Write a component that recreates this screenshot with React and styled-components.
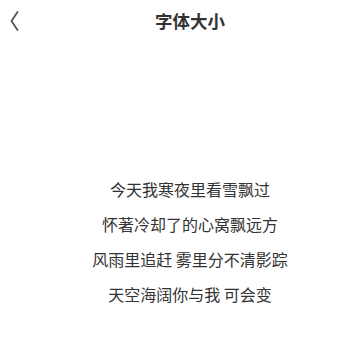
import React from "react";
import styled, { createGlobalStyle } from "styled-components";

const Global = createGlobalStyle`
  html, body { margin: 0; padding: 0; background: #fff; }
  body { font-family: "Noto Sans CJK SC", "Noto Sans", sans-serif; }
`;

const Page = styled.div`
  width: 362px;
  height: 338px;
  background: #fff;
  display: flex;
  flex-direction: column;
  overflow: hidden;
`;

const Header = styled.header`
  height: 42px;
  display: grid;
  grid-template-columns: 40px 1fr 40px;
  align-items: center;
  padding-left: 18px;
  margin-left: -18px;
`;

const Back = styled.button`
  border: 0;
  background: none;
  padding: 0 0 0 18px;
  height: 42px;
  display: flex;
  align-items: center;
  justify-content: flex-start;
  color: #555;
  cursor: pointer;
`;

const Title = styled.h1`
  margin: 0;
  text-align: center;
  font-size: 17.5px;
  font-weight: 700;
  color: #333;
  line-height: 42px;
  padding-left: 18px;
`;

const Lyrics = styled.div`
  margin-top: 130px;
  padding-left: 18px;
  display: flex;
  flex-direction: column;
  align-items: center;
`;

const Line = styled.p`
  margin: 0;
  font-size: 16px;
  line-height: 35px;
  color: #333;
  white-space: pre;
`;

const lines = [
  "今天我寒夜里看雪飘过",
  "怀著冷却了的心窝飘远方",
  "风雨里追赶 雾里分不清影踪",
  "天空海阔你与我 可会变",
];

export default function App() {
  return (
    <>
      <Global />
      <Page>
        <Header>
          <Back aria-label="返回">
            <svg width="9" height="20" viewBox="0 0 9 20" style={{ marginLeft: -8 }}>
              <path d="M7.5 1 L1.5 10 L7.5 19" fill="none" stroke="#555" strokeWidth="1.8" strokeLinecap="round" strokeLinejoin="round" />
            </svg>
          </Back>
          <Title>字体大小</Title>
          <span />
        </Header>
        <Lyrics>
          {lines.map((l) => (
            <Line key={l}>{l}</Line>
          ))}
        </Lyrics>
      </Page>
    </>
  );
}
